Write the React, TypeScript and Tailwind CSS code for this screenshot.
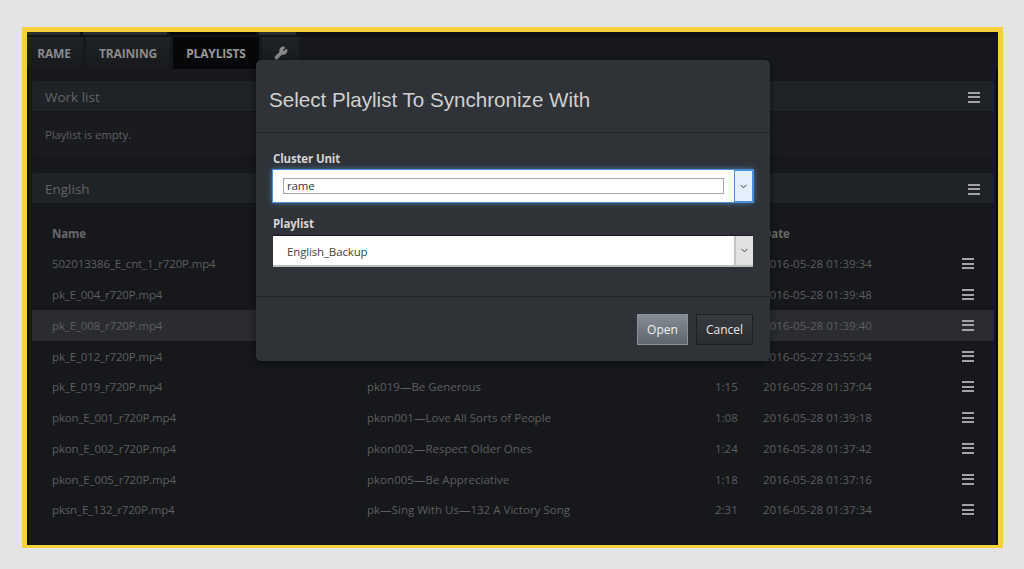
import { ChevronDown, Wrench } from "lucide-react";

const rows = [
  { name: "502013386_E_cnt_1_r720P.mp4", title: "", time: "", date: "2016-05-28 01:39:34" },
  { name: "pk_E_004_r720P.mp4", title: "", time: "", date: "2016-05-28 01:39:48" },
  { name: "pk_E_008_r720P.mp4", title: "", time: "", date: "2016-05-28 01:39:40", active: true },
  { name: "pk_E_012_r720P.mp4", title: "", time: "", date: "2016-05-27 23:55:04" },
  { name: "pk_E_019_r720P.mp4", title: "pk019—Be Generous", time: "1:15", date: "2016-05-28 01:37:04" },
  { name: "pkon_E_001_r720P.mp4", title: "pkon001—Love All Sorts of People", time: "1:08", date: "2016-05-28 01:39:18" },
  { name: "pkon_E_002_r720P.mp4", title: "pkon002—Respect Older Ones", time: "1:24", date: "2016-05-28 01:37:42" },
  { name: "pkon_E_005_r720P.mp4", title: "pkon005—Be Appreciative", time: "1:18", date: "2016-05-28 01:37:16" },
  { name: "pksn_E_132_r720P.mp4", title: "pk—Sing With Us—132 A Victory Song", time: "2:31", date: "2016-05-28 01:37:34" },
];

function Burger() {
  return (
    <div className="flex h-[11px] w-[12px] flex-col justify-between">
      <span className="h-[2px] bg-[#a3a3a3]" />
      <span className="h-[2px] bg-[#a3a3a3]" />
      <span className="h-[2px] bg-[#a3a3a3]" />
    </div>
  );
}

function Tab({ label, active, className }: { label: string; active?: boolean; className: string }) {
  return (
    <div
      className={`flex h-[32px] items-center justify-center pt-[1px] text-[12px] font-bold tracking-[-0.15px] text-[#8a8a8a] ${
        active ? "bg-[#060708] text-[#9a9a9a]" : "bg-gradient-to-b from-[#1f2226] to-[#17191c]"
      } ${className}`}
    >
      {label}
    </div>
  );
}

function PanelHeader({ title }: { title: string }) {
  return (
    <div className="flex h-[31px] items-center justify-between rounded-t-[3px] border-b border-[#15171a] bg-[#1f2226] pl-[13px] pr-[14px] pt-[2px] text-[13.5px] text-[#636363]">
      {title}
      <Burger />
    </div>
  );
}

function SelectBox({ value, focused }: { value: string; focused?: boolean }) {
  return (
    <div
      className={`flex h-[32px] bg-white ${
        focused
          ? "shadow-[0_0_6px_rgba(90,170,240,0.8)] outline outline-1 outline-[#4a90d9]"
          : "border-t border-t-[#17191c] border-b-2 border-b-[#bdbdbd]"
      }`}
    >
      <div className={`flex min-w-0 flex-1 items-center ${focused ? "px-[10px]" : "pl-[14px] pt-[3px]"}`}>
        {focused ? (
          <div className="flex h-[16px] w-full items-center border border-[#a8a8a8] pl-[3px] text-[11.5px] leading-none text-[#333]">
            {value}
          </div>
        ) : (
          <span className="text-[11.5px] text-[#444]">{value}</span>
        )}
      </div>
      <div
        className={`flex w-[19px] items-center justify-center ${
          focused ? "border border-[#4a90d9] bg-[#e3effa]" : "border-l-2 border-l-[#c4c4c4] bg-[#e2e2e2]"
        }`}
      >
        <ChevronDown size={11} strokeWidth={2} className="text-[#333]" />
      </div>
    </div>
  );
}

export default function App() {
  return (
    <div
      className="relative flex h-[569px] w-[1024px] overflow-hidden bg-[#e4e4e4] pb-[21px] pl-[22px] pr-[21px] pt-[27px]"
      style={{ fontFamily: '"Open Sans", "Noto Sans", sans-serif' }}
    >
      <div className="flex min-w-0 flex-1 border-[5px] border-b-[3px] border-[#f5d13a]">
        <div className="flex min-w-0 flex-1 flex-col bg-[#16181b]">
          <div className="flex h-[5px] gap-[3px] bg-[#101215]">
            <span className="h-[3px] w-[53px] bg-[#2a2d31]" />
            <span className="h-[3px] w-[84px] bg-[#2a2d31]" />
            <span className="h-[3px] w-[86px] bg-[#060708]" />
            <span className="h-[3px] w-[37px] bg-[#2a2d31]" />
          </div>

          <div className="flex items-start gap-[3px]">
            <Tab label="RAME" className="w-[56px] pr-[2px]" />
            <Tab label="TRAINING" className="w-[84px]" />
            <Tab label="PLAYLISTS" active className="w-[86px]" />
            <Tab label="" className="w-[37px]" />
          </div>

          <div className="flex flex-1 flex-col gap-[18px] border-x-2 border-[#0a0b0c] pl-[3px] pr-[2px] pt-[12px]">
            <section className="rounded-[3px] bg-[#191b1e]">
              <PanelHeader title="Work list" />
              <div className="flex h-[43px] items-center pl-[13px] pt-[2px] text-[11.5px] tracking-[-0.15px] text-[#5e5e5e]">
                Playlist is empty.
              </div>
            </section>

            <section>
              <PanelHeader title="English" />
              <div className="grid h-[44.5px] grid-cols-[315px_348px_48px_1fr] items-center pl-[20px] pt-[15px] text-[11.5px] font-bold tracking-[-0.15px] text-[#686868]">
                <span>Name</span>
                <span />
                <span />
                <span>Date</span>
              </div>
              <div className="flex flex-col">
                {rows.map((row) => (
                  <div
                    key={row.name}
                    className={`grid h-[30.75px] grid-cols-[315px_348px_48px_1fr_32px] items-center pl-[20px] text-[11.5px] text-[#5e5e5e] ${
                      row.active ? "bg-[#2a2c30]" : ""
                    }`}
                  >
                    <span className="tracking-[-0.15px]">{row.name}</span>
                    <span className="tracking-[0.02px]">{row.title}</span>
                    <span>{row.time}</span>
                    <span className="tracking-[0.02px]">{row.date}</span>
                    <Burger />
                  </div>
                ))}
              </div>
            </section>
          </div>
        </div>
      </div>

      <Wrench size={14} className="absolute left-[274px] top-[46px] text-[#8a8a8a]" fill="#8a8a8a" />

      <div className="absolute left-[256px] top-[60px] flex h-[301px] w-[514px] flex-col rounded-[5px] bg-[#2f3338] shadow-[0_2px_8px_rgba(0,0,0,0.5)]">
        <div className="flex h-[73px] items-center border-b border-[#202327] pl-[13px] pt-[8px]">
          <h2
            className="text-[20.6px] font-normal text-[#d0d0d0]"
            style={{ fontFamily: '"Liberation Sans", Arial, sans-serif' }}
          >
            Select Playlist To Synchronize With
          </h2>
        </div>
        <div className="flex h-[164px] flex-col border-b border-[#202327] px-[17px] pt-[18px] text-[11.5px] tracking-[-0.15px]">
          <label className="mb-[3px] font-bold leading-[16px] text-[#d4d4d4]">Cluster Unit</label>
          <SelectBox value="rame" focused />
          <label className="mb-[3px] mt-[14px] font-bold leading-[16px] text-[#d4d4d4]">Playlist</label>
          <SelectBox value="English_Backup" />
        </div>
        <div className="flex flex-1 items-start justify-end gap-[8px] pr-[17px] pt-[17px] text-[12px]">
          <button className="flex h-[31px] w-[51px] items-center justify-center border border-[#8a9096] bg-gradient-to-b from-[#858c93] to-[#5f666c] text-[#f0f0f0]">
            Open
          </button>
          <button className="flex h-[31px] w-[57px] items-center justify-center border border-[#1d1f22] bg-gradient-to-b from-[#363a3f] to-[#2a2d31] text-[#e6e6e6]">
            Cancel
          </button>
        </div>
      </div>
    </div>
  );
}
